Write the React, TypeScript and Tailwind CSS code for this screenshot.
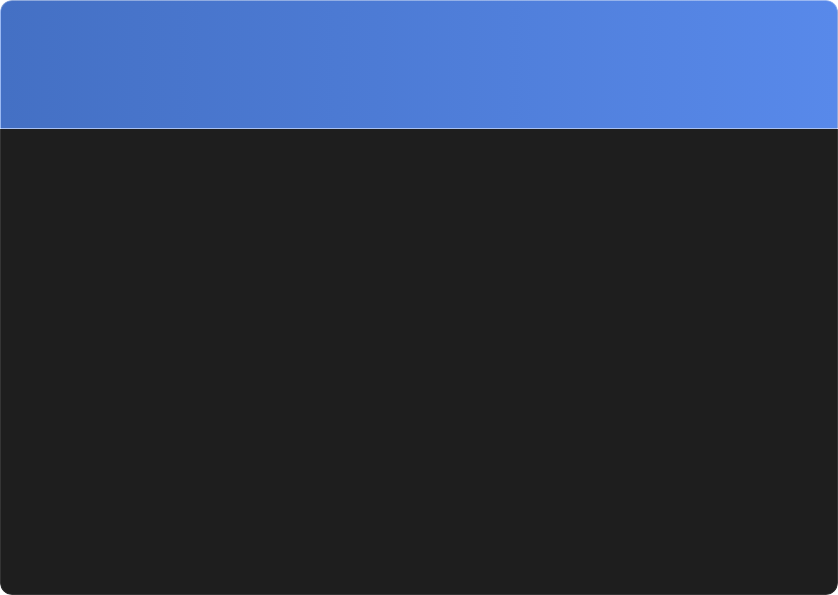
const App = () => {
  return (
    <div className="w-[838px] h-[595px] bg-white">
      <div className="w-full h-full rounded-xl overflow-hidden flex flex-col">
        <header className="h-[129px] shrink-0 rounded-t-xl bg-gradient-to-r from-[#4470c4] to-[#5889ea] border-x border-t border-white/40 border-b border-b-[#a9c1f2]" />
        <main className="flex-1 rounded-b-xl bg-[#1e1e1e] border-x border-b border-white/10" />
      </div>
    </div>
  );
};

export default App;
